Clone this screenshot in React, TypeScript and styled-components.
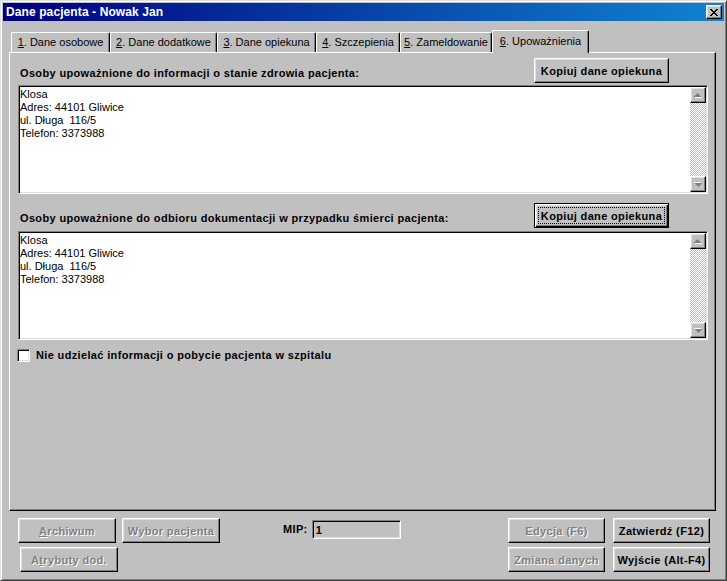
import React from "react";
import styled, { createGlobalStyle, css } from "styled-components";

const GlobalStyle = createGlobalStyle`
  body {
    margin: 0;
    background: #c0c0c0;
    font-family: "Liberation Sans", Arial, sans-serif;
    font-size: 11px;
  }
`;

const raised = css`
  border: 1px solid;
  border-color: #fff #000 #000 #fff;
  box-shadow: inset -1px -1px #808080, inset 1px 1px #dfdfdf;
`;

const sunken = css`
  border: 1px solid;
  border-color: #808080 #fff #fff #808080;
  box-shadow: inset 1px 1px #000, inset -1px -1px #dfdfdf;
`;

const Window = styled.div`
  width: 727px;
  height: 581px;
  box-sizing: border-box;
  padding: 2px;
  background: #c0c0c0;
  border: 1px solid;
  border-color: #dfdfdf #404040 #404040 #dfdfdf;
  box-shadow: inset 1px 1px #fff, inset -1px -1px #808080;
  display: flex;
  flex-direction: column;
`;

const TitleBar = styled.div`
  height: 18px;
  flex: none;
  display: flex;
  align-items: center;
  justify-content: space-between;
  padding: 0 2px 0 3px;
  background: linear-gradient(to right, #000080, #1084d0);
`;

const TitleText = styled.span`
  color: #fff;
  font-weight: bold;
  font-size: 12px;
  letter-spacing: 0.1px;
`;

const CloseButton = styled.div`
  ${raised};
  width: 16px;
  height: 14px;
  box-sizing: border-box;
  background: #c0c0c0;
  display: flex;
  align-items: center;
  justify-content: center;
`;

const Body = styled.div`
  flex: 1;
  display: flex;
  flex-direction: column;
  padding: 9px 8px 0 6px;
`;

const TabStrip = styled.div`
  height: 22px;
  display: flex;
  align-items: flex-end;
  padding-left: 2px;
`;

const Tab = styled.div<{ $w: number; $active?: boolean }>`
  width: ${(p) => p.$w}px;
  height: 20px;
  box-sizing: border-box;
  flex: none;
  display: flex;
  align-items: center;
  justify-content: center;
  background: #c0c0c0;
  border-top: 1px solid #fff;
  border-left: 1px solid #fff;
  border-right: 1px solid #000;
  border-top-left-radius: 2px;
  border-top-right-radius: 2px;
  box-shadow: inset -1px 0 #808080;
  color: #000;
  padding-bottom: 1px;
  ${(p) =>
    p.$active &&
    css`
      height: 23px;
      margin: 0 0 -1px 0;
      position: relative;
      z-index: 1;
      padding-bottom: 3px;
    `}
`;

const Panel = styled.div`
  flex: 1;
  box-sizing: border-box;
  border: 1px solid;
  border-color: #fff #000 #000 #fff;
  box-shadow: inset -1px -1px #808080;
  padding: 5px 7px 0 8px;
  display: flex;
  flex-direction: column;
`;

const SectionHeader = styled.div<{ $top?: number }>`
  display: flex;
  align-items: flex-end;
  justify-content: space-between;
  margin-top: ${(p) => p.$top ?? 0}px;
  padding-right: 39px;
`;

const BoldLabel = styled.span`
  font-weight: bold;
  letter-spacing: 0.35px;
  line-height: 13px;
  color: #000;
`;

const SectionLabel = styled(BoldLabel)`
  margin-left: 2px;
  padding-bottom: 3px;
`;

const Button = styled.div<{ $w: number; $default?: boolean; $disabled?: boolean }>`
  ${raised};
  width: ${(p) => p.$w}px;
  height: 25px;
  box-sizing: border-box;
  background: #c0c0c0;
  display: flex;
  align-items: center;
  justify-content: center;
  font-weight: bold;
  letter-spacing: 0.35px;
  color: #000;
  white-space: nowrap;
  ${(p) =>
    p.$disabled &&
    css`
      color: #808080;
      text-shadow: 1px 1px 0 #fff;
    `}
  ${(p) =>
    p.$default &&
    css`
      border-color: #000;
      box-shadow: inset 1px 1px #fff, inset -1px -1px #000, inset -2px -2px #808080,
        inset 2px 2px #dfdfdf;
    `}
`;

const FocusRect = styled.span`
  flex: 1;
  align-self: stretch;
  margin: 3px 3px 3px 3px;
  border: 1px dotted #000;
  display: flex;
  align-items: center;
  justify-content: center;
`;

const Memo = styled.div<{ $top: number }>`
  ${sunken};
  height: 109px;
  box-sizing: border-box;
  margin-top: ${(p) => p.$top}px;
  padding: 1px;
  background: #fff;
  display: flex;
`;

const MemoText = styled.div`
  flex: 1;
  padding: 1px 0 0 0;
  line-height: 13px;
  color: #000;
`;

const ScrollBar = styled.div`
  width: 16px;
  display: flex;
  flex-direction: column;
`;

const ScrollArrow = styled.div`
  ${raised};
  width: 16px;
  height: 16px;
  box-sizing: border-box;
  background: #c0c0c0;
  display: flex;
  align-items: center;
  justify-content: center;
`;

const ScrollTrack = styled.div`
  flex: 1;
  background-image: repeating-conic-gradient(#fff 0 25%, #c0c0c0 0 50%);
  background-size: 2px 2px;
`;

const CheckRow = styled.div`
  display: flex;
  align-items: center;
  gap: 6px;
  margin: 9px 0 0 -1px;
`;

const CheckBox = styled.div`
  ${sunken};
  width: 13px;
  height: 13px;
  box-sizing: border-box;
  background: #fff;
`;

const BottomBar = styled.div`
  height: 67px;
  flex: none;
  box-sizing: border-box;
  padding: 7px 6px 0 9px;
  display: flex;
  align-items: flex-start;
`;

const ButtonGrid = styled.div<{ $cols: string; $gap: number }>`
  display: grid;
  grid-template-columns: ${(p) => p.$cols};
  column-gap: ${(p) => p.$gap}px;
  row-gap: 4px;
`;

const Offset = styled.div`
  margin-left: 2px;
`;

const MipGroup = styled.div`
  display: flex;
  align-items: center;
  margin: 2px 0 0 63px;
  gap: 4px;
`;

const MipField = styled.div`
  ${sunken};
  width: 89px;
  height: 19px;
  box-sizing: border-box;
  padding: 0 3px;
  display: flex;
  align-items: center;
  font-weight: bold;
  background: #c0c0c0;
`;

const Spacer = styled.div`
  flex: 1;
`;

const CloseGlyph = () => (
  <svg width="8" height="7" viewBox="0 0 8 7">
    <path d="M0 0h2v1h1v1h2V1h1V0h2v1H7v1H6v1H5v1h1v1h1v1h1v1H6V6H5V5H3v1H2v1H0V6h1V5h1V4h1V3H2V2H1V1H0z" fill="#000" />
  </svg>
);

const Arrow = ({ down }: { down?: boolean }) => (
  <svg width="8" height="5" viewBox="0 0 8 5" style={{ transform: down ? "rotate(180deg)" : undefined }}>
    <path d="M3 0h1v1h1v1h1v1h1v1H0V3h1V2h1V1h1z" fill="#808080" />
    <path d="M1 4h7v1H1z" fill="#fff" />
  </svg>
);

const lines = ["Klosa", "Adres: 44101 Gliwice", "ul. Długa  116/5", "Telefon: 3373988"];

const MemoBox = ({ top }: { top: number }) => (
  <Memo $top={top}>
    <MemoText>
      {lines.map((l) => (
        <div key={l} style={{ whiteSpace: "pre" }}>
          {l}
        </div>
      ))}
    </MemoText>
    <ScrollBar>
      <ScrollArrow>
        <Arrow />
      </ScrollArrow>
      <ScrollTrack />
      <ScrollArrow>
        <Arrow down />
      </ScrollArrow>
    </ScrollBar>
  </Memo>
);

const tabs = [
  { n: "1", t: ". Dane osobowe", w: 99 },
  { n: "2", t: ". Dane dodatkowe", w: 107 },
  { n: "3", t: ". Dane opiekuna", w: 99 },
  { n: "4", t: ". Szczepienia", w: 84 },
  { n: "5", t: ". Zameldowanie", w: 92 },
  { n: "6", t: ". Upoważnienia", w: 97, active: true },
];

export default function App() {
  return (
    <>
      <GlobalStyle />
      <Window>
        <TitleBar>
          <TitleText>Dane pacjenta - Nowak Jan</TitleText>
          <CloseButton>
            <CloseGlyph />
          </CloseButton>
        </TitleBar>
        <Body>
          <TabStrip>
            {tabs.map((t) => (
              <Tab key={t.n} $w={t.w} $active={t.active}>
                <span>
                  <u>{t.n}</u>
                  {t.t}
                </span>
              </Tab>
            ))}
          </TabStrip>
          <Panel>
            <SectionHeader>
              <SectionLabel>Osoby upoważnione do informacji o stanie zdrowia pacjenta:</SectionLabel>
              <Button $w={135}>Kopiuj dane opiekuna</Button>
            </SectionHeader>
            <MemoBox top={2} />
            <SectionHeader $top={9}>
              <SectionLabel>Osoby upoważnione do odbioru dokumentacji w przypadku śmierci pacjenta:</SectionLabel>
              <Button $w={135} $default>
                <FocusRect>Kopiuj dane opiekuna</FocusRect>
              </Button>
            </SectionHeader>
            <MemoBox top={3} />
            <CheckRow>
              <CheckBox />
              <BoldLabel>Nie udzielać informacji o pobycie pacjenta w szpitalu</BoldLabel>
            </CheckRow>
          </Panel>
          <BottomBar>
            <ButtonGrid $cols="98px 98px" $gap={6}>
              <Button $w={98} $disabled>
                <span>
                  <u>A</u>rchiwum
                </span>
              </Button>
              <Button $w={98} $disabled>
                Wybor pacjenta
              </Button>
              <Offset>
                <Button $w={98} $disabled>
                  <span>
                    A<u>t</u>rybuty dod.
                  </span>
                </Button>
              </Offset>
            </ButtonGrid>
            <MipGroup>
              <BoldLabel>MIP:</BoldLabel>
              <MipField>1</MipField>
            </MipGroup>
            <Spacer />
            <ButtonGrid $cols="97px 97px" $gap={8}>
              <Button $w={97} $disabled>
                Edycja (F6)
              </Button>
              <Button $w={97}>Zatwierdź (F12)</Button>
              <Button $w={97} $disabled>
                Zmiana danych
              </Button>
              <Button $w={97}>Wyjście (Alt-F4)</Button>
            </ButtonGrid>
          </BottomBar>
        </Body>
      </Window>
    </>
  );
}
